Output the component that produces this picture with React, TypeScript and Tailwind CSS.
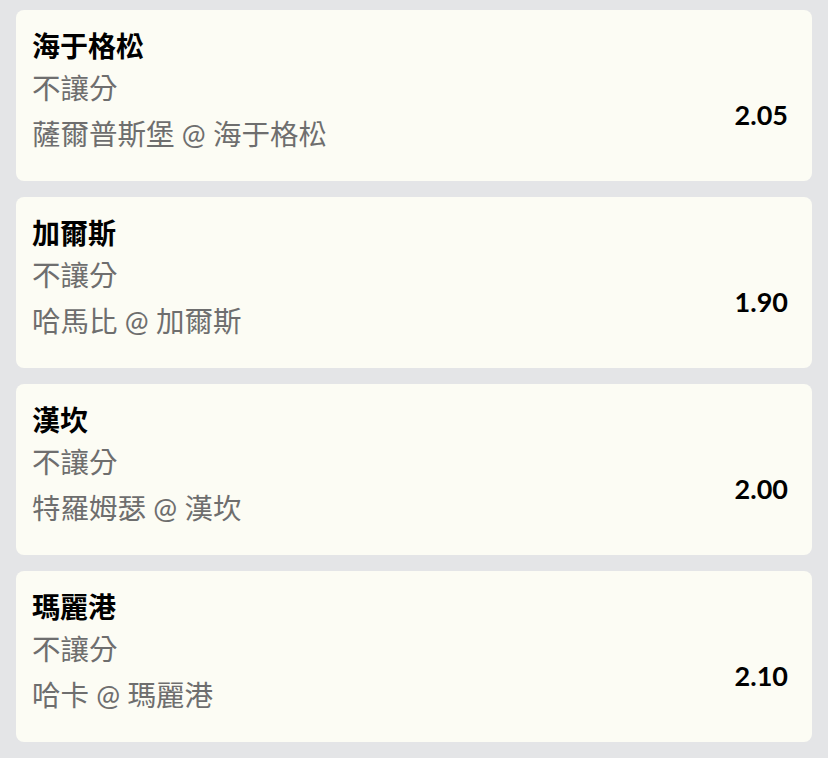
const BETS = [
  { team: '海于格松', market: '不讓分', match: '薩爾普斯堡 @ 海于格松', odds: '2.05' },
  { team: '加爾斯', market: '不讓分', match: '哈馬比 @ 加爾斯', odds: '1.90' },
  { team: '漢坎', market: '不讓分', match: '特羅姆瑟 @ 漢坎', odds: '2.00' },
  { team: '瑪麗港', market: '不讓分', match: '哈卡 @ 瑪麗港', odds: '2.10' },
];

function BetCard({ team, market, match, odds }: (typeof BETS)[number]) {
  return (
    <div className="flex h-[171px] rounded-lg bg-[#fcfcf4] pl-4 pr-6">
      <div className="flex-1 min-w-0 pt-[15px]">
        <div className="text-[28px] leading-[42px] font-bold text-black">{team}</div>
        <div className="text-[28.5px] leading-[42px] text-[#6e6e6e]">{market}</div>
        <div className="mt-1 text-[28.5px] leading-[42px] text-[#6e6e6e]">{match}</div>
      </div>
      <div className="pt-[84px] text-[27px] leading-[42px] font-bold text-black">{odds}</div>
    </div>
  );
}

export default function App() {
  return (
    <div
      className="min-h-[758px] bg-[#e4e5e7] px-4 pt-[10px] flex flex-col gap-4"
      style={{ fontFamily: 'Lato, "Noto Sans CJK TC", sans-serif' }}
    >
      {BETS.map((bet) => (
        <BetCard key={bet.team} {...bet} />
      ))}
    </div>
  );
}
